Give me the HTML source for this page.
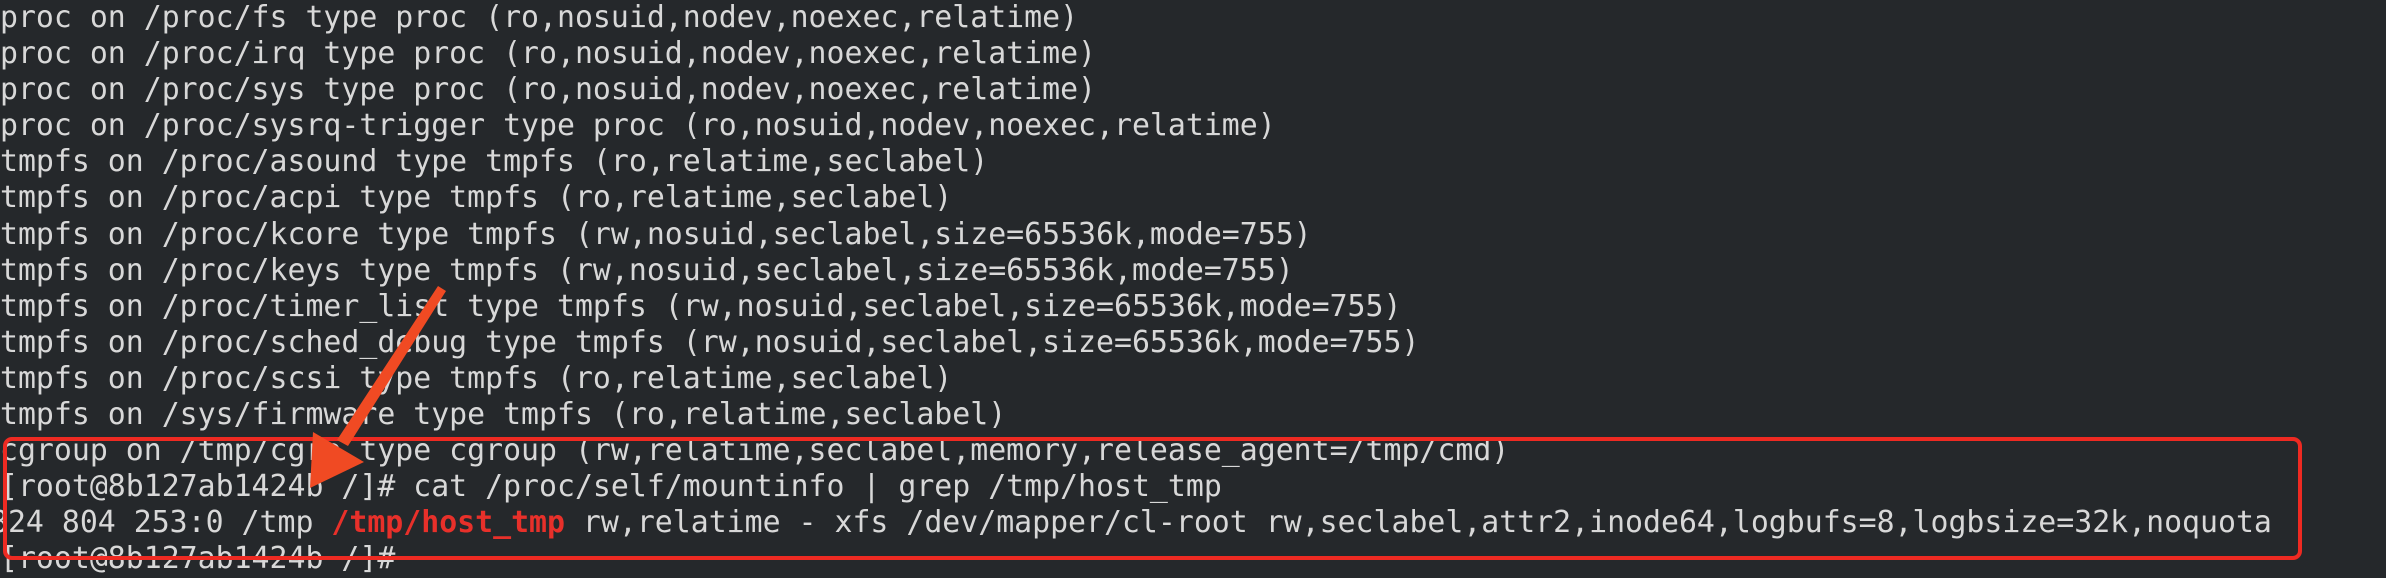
<!DOCTYPE html>
<html><head><meta charset="utf-8"><style>
html,body{margin:0;padding:0;}
body{width:2386px;height:578px;background:#25282b;overflow:hidden;position:relative;}
pre{margin:0;position:absolute;left:0;top:0;font-family:"DejaVu Sans Mono","Liberation Mono",monospace;font-size:29.85px;line-height:36.1px;color:#d8d8d8;white-space:pre;}
.r{color:#e8302a;font-weight:bold;}
.box{position:absolute;left:3px;top:437px;width:2291px;height:115px;border:4px solid #ee2a22;border-radius:9px;}
</style></head><body>
<pre>proc on /proc/fs type proc (ro,nosuid,nodev,noexec,relatime)
proc on /proc/irq type proc (ro,nosuid,nodev,noexec,relatime)
proc on /proc/sys type proc (ro,nosuid,nodev,noexec,relatime)
proc on /proc/sysrq-trigger type proc (ro,nosuid,nodev,noexec,relatime)
tmpfs on /proc/asound type tmpfs (ro,relatime,seclabel)
tmpfs on /proc/acpi type tmpfs (ro,relatime,seclabel)
tmpfs on /proc/kcore type tmpfs (rw,nosuid,seclabel,size=65536k,mode=755)
tmpfs on /proc/keys type tmpfs (rw,nosuid,seclabel,size=65536k,mode=755)
tmpfs on /proc/timer_list type tmpfs (rw,nosuid,seclabel,size=65536k,mode=755)
tmpfs on /proc/sched_debug type tmpfs (rw,nosuid,seclabel,size=65536k,mode=755)
tmpfs on /proc/scsi type tmpfs (ro,relatime,seclabel)
tmpfs on /sys/firmware type tmpfs (ro,relatime,seclabel)
cgroup on /tmp/cgrp type cgroup (rw,relatime,seclabel,memory,release_agent=/tmp/cmd)
[root@8b127ab1424b /]# cat /proc/self/mountinfo | grep /tmp/host_tmp
<span style="margin-left:-10px">824 804 253:0 /tmp <span class="r">/tmp/host_tmp</span> rw,relatime - xfs /dev/mapper/cl-root rw,seclabel,attr2,inode64,logbufs=8,logbsize=32k,noquota</span>
[root@8b127ab1424b /]#</pre>
<div class="box"></div>
<svg width="2386" height="578" style="position:absolute;left:0;top:0">
<polygon points="438,286 446,291 348,446 337,440" fill="#f04a23"/>
<polygon points="310,488 313,432 364,462" fill="#f04a23"/>
</svg>
</body></html>
